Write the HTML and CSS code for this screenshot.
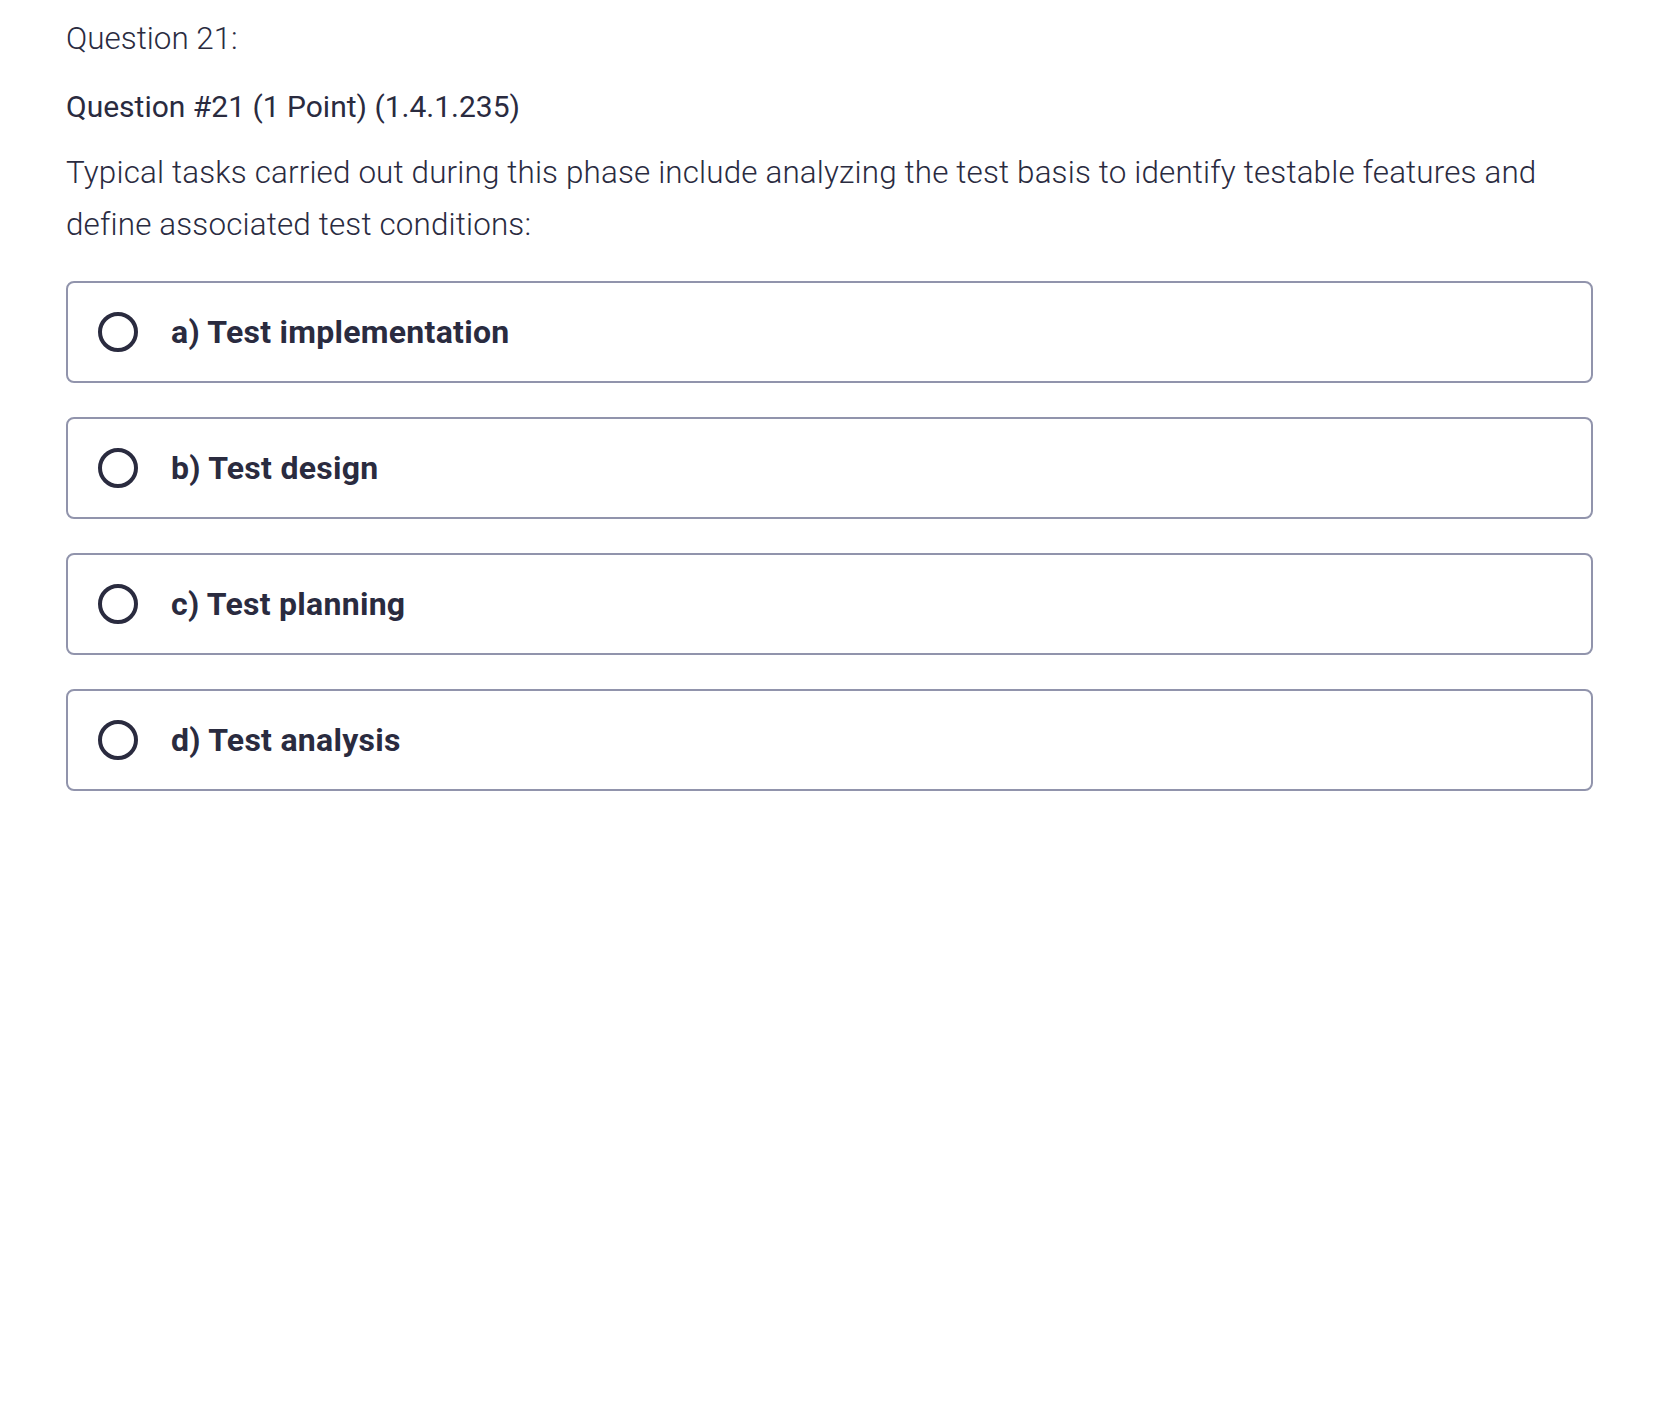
FILE: index.html
```html
<!DOCTYPE html>
<html lang="en">
<head>
<meta charset="utf-8">
<title>Question 21</title>
<link rel="stylesheet" href="styles.css">
</head>
<body>
<main class="page">
  <div class="q-label">Question 21:</div>
  <div class="q-title">Question #21 (1 Point) (1.4.1.235)</div>
  <p class="q-text">Typical tasks carried out during this phase include analyzing the test basis to identify testable features and define associated test conditions:</p>
  <ul class="options">
    <li class="option"><span class="radio"></span><span class="opt-text">a) Test implementation</span></li>
    <li class="option"><span class="radio"></span><span class="opt-text">b) Test design</span></li>
    <li class="option"><span class="radio"></span><span class="opt-text">c) Test planning</span></li>
    <li class="option"><span class="radio"></span><span class="opt-text">d) Test analysis</span></li>
  </ul>
</main>
</body>
</html>
```

FILE: styles.css
```css
html, body {
  margin: 0;
  padding: 0;
  background: #ffffff;
}
body {
  font-family: Roboto, "Liberation Sans", Arial, sans-serif;
  color: #2a2b3f;
}
.page {
  padding: 18px 63px 0 66px;
}
.q-label {
  font-size: 31.4px;
  line-height: 42px;
  font-weight: 300;
}
.q-title {
  margin-top: 26px;
  font-size: 30px;
  line-height: 42px;
  font-weight: 400;
}
.q-text {
  margin: 19px 0 0 0;
  font-size: 31.4px;
  line-height: 52px;
  font-weight: 300;
  letter-spacing: 0.15px;
}
.options {
  list-style: none;
  margin: 30px 0 0 0;
  padding: 0;
  display: flex;
  flex-direction: column;
  gap: 34px;
}
.option {
  box-sizing: border-box;
  height: 102px;
  border: 2px solid #9194ac;
  border-radius: 8px;
  display: flex;
  align-items: center;
  padding-left: 30px;
}
.radio {
  box-sizing: border-box;
  width: 40px;
  height: 40px;
  border: 4px solid #2a2b3f;
  border-radius: 50%;
  flex: none;
}
.opt-text {
  margin-left: 33px;
  font-size: 32px;
  font-weight: 700;
  letter-spacing: 0.27px;
  line-height: 40px;
}
```
